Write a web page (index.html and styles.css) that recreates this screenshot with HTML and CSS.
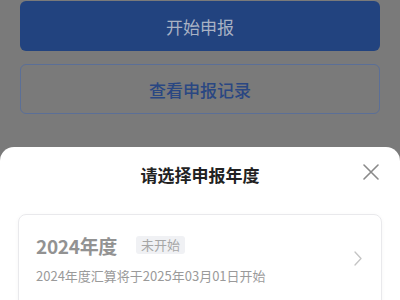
FILE: index.html
```html
<!DOCTYPE html>
<html lang="zh">
<head>
<meta charset="utf-8">
<link rel="stylesheet" href="styles.css">
</head>
<body>
<div class="page">
  <div class="actions">
    <div class="btn btn-primary">开始申报</div>
    <div class="btn btn-outline">查看申报记录</div>
  </div>
  <div class="sheet">
    <div class="sheet-header">
      <div class="sheet-title">请选择申报年度</div>
      <svg class="close" width="16" height="16" viewBox="0 0 16 16"><path d="M1 1L15 15M15 1L1 15" stroke="#8a8a8a" stroke-width="1.6" stroke-linecap="round" fill="none"/></svg>
    </div>
    <div class="card">
      <div class="card-body">
        <div class="card-row">
          <span class="year">2024年度</span>
          <span class="tag">未开始</span>
        </div>
        <div class="desc">2024年度汇算将于2025年03月01日开始</div>
      </div>
      <svg class="chevron" width="8" height="15" viewBox="0 0 8 15"><path d="M1 1L7 7.5L1 14" stroke="#c4c4c4" stroke-width="1.3" fill="none" stroke-linecap="round" stroke-linejoin="round"/></svg>
    </div>
  </div>
</div>
</body>
</html>
```
FILE: styles.css
```css
html, body {
  margin: 0;
  padding: 0;
  background: #7a7a7a;
  font-family: "Noto Sans CJK SC", "Noto Sans", sans-serif;
  overflow: hidden;
}
.page {
  width: 400px;
  height: 300px;
  display: flex;
  flex-direction: column;
  overflow: hidden;
}
.actions {
  padding: 1px 20px 0;
  display: flex;
  flex-direction: column;
  gap: 13px;
}
.btn {
  height: 50px;
  border-radius: 6px;
  display: flex;
  align-items: center;
  justify-content: center;
  font-size: 17px;
  box-sizing: border-box;
}
.btn-primary {
  background: #22437f;
  color: #a9b2c4;
}
.btn-outline {
  border: 1px solid #5b6f97;
  color: #2a4782;
  font-weight: 500;
}
.sheet {
  margin-top: 33px;
  flex: 1;
  background: #fff;
  border-radius: 14px 14px 0 0;
  padding: 0 18px;
}
.sheet-header {
  position: relative;
  padding-top: 17px;
  height: 49px;
  box-sizing: border-box;
}
.sheet-title {
  text-align: center;
  font-size: 17px;
  font-weight: 700;
  color: #222;
  line-height: 22px;
}
.close {
  position: absolute;
  right: 3px;
  top: 17px;
}
.card {
  margin-top: 18px;
  border: 1px solid #e9e9ec;
  border-radius: 8px;
  box-shadow: 0 1px 4px rgba(0,0,0,0.04);
  display: flex;
  align-items: flex-start;
  padding: 18px 19px 30px 17px;
}
.card-body {
  flex: 1;
}
.card-row {
  display: flex;
  align-items: center;
  height: 24px;
}
.year {
  font-size: 19px;
  font-weight: 700;
  color: #929292;
  letter-spacing: -0.3px;
}
.tag {
  margin-left: 19px;
  background: #f0f1f4;
  color: #a6a6a6;
  font-size: 13px;
  line-height: 18px;
  padding: 0 5px;
  border-radius: 3px;
}
.desc {
  margin-top: 10px;
  font-size: 13px;
  color: #9a9a9a;
  line-height: 18px;
}
.chevron {
  margin-top: 18px;
}
```
